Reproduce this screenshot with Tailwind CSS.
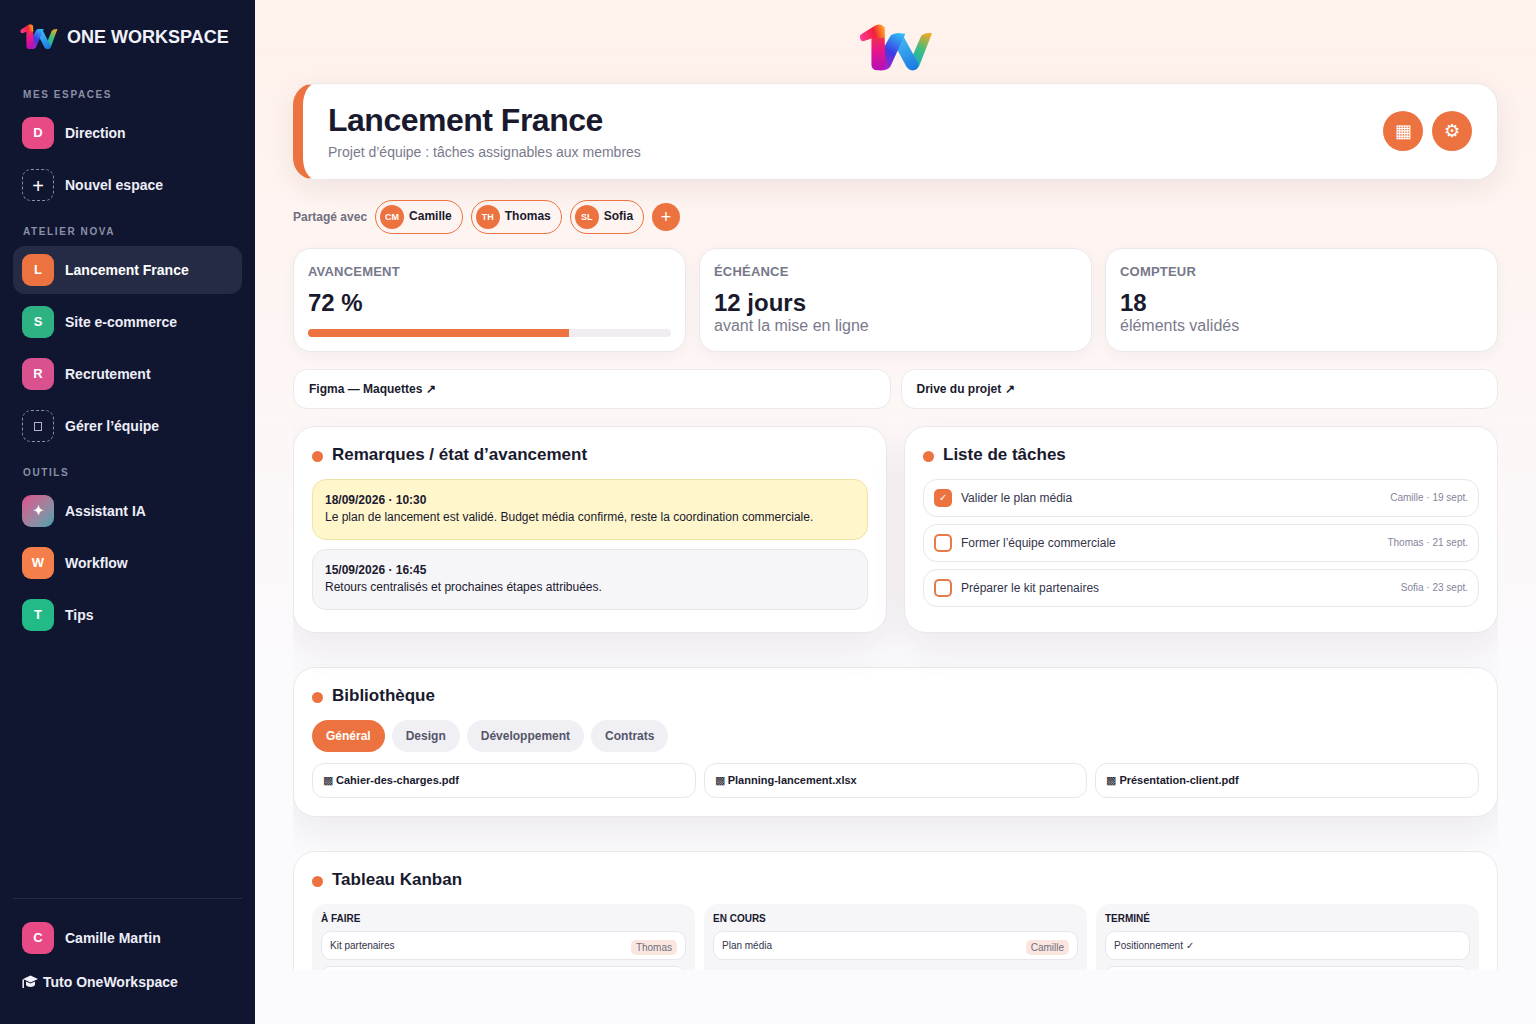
<!DOCTYPE html>
<html lang="fr">
<head>
    <meta charset="UTF-8">
    <title>One Workspace</title>
    <script src="https://cdn.jsdelivr.net/npm/@tailwindcss/browser@4"></script>
</head>
<body class="bg-[#fbfafd] font-['Liberation_Sans',Arial,sans-serif] text-[#1a1a2e] h-[1024px] overflow-hidden">
<svg class="absolute w-0 h-0">
    <defs>
        <linearGradient id="g1" gradientUnits="userSpaceOnUse" x1="60" y1="80" x2="130" y2="60"><stop offset="0" stop-color="#ff3a9a"/><stop offset="0.6" stop-color="#f2203a"/><stop offset="1" stop-color="#ff9a1e"/></linearGradient>
        <linearGradient id="g2" gradientUnits="userSpaceOnUse" x1="110" y1="60" x2="115" y2="185"><stop offset="0" stop-color="#f5402a"/><stop offset="0.5" stop-color="#e8158c"/><stop offset="1" stop-color="#b010b8"/></linearGradient>
        <linearGradient id="g3" gradientUnits="userSpaceOnUse" x1="180" y1="70" x2="115" y2="182"><stop offset="0" stop-color="#30c0f5"/><stop offset="0.5" stop-color="#3b3be6"/><stop offset="1" stop-color="#d018c0"/></linearGradient>
        <linearGradient id="g4" gradientUnits="userSpaceOnUse" x1="160" y1="70" x2="220" y2="182"><stop offset="0" stop-color="#4cc8f8"/><stop offset="1" stop-color="#1a78e0"/></linearGradient>
        <linearGradient id="g5" gradientUnits="userSpaceOnUse" x1="215" y1="182" x2="268" y2="70"><stop offset="0" stop-color="#10a8d0"/><stop offset="0.55" stop-color="#40bd80"/><stop offset="1" stop-color="#ffa51f"/></linearGradient>
        <symbol id="logo" viewBox="57 42 220 146" preserveAspectRatio="none">
            <path d="M205 165 L240 82 Q248 68 274 70 L236 170 Q228 186 210 182Z" fill="url(#g5)"/>
            <path d="M150 78 Q165 66 185 72 L232 160 Q236 178 222 182 Q208 186 198 172 L160 100Z" fill="url(#g4)"/>
            <path d="M100 170 L148 82 Q155 70 175 70 L195 72 L150 172 Q142 184 118 183 Q98 180 100 170Z" fill="url(#g3)"/>
            <path d="M94 70 L132 50 L136 165 Q134 184 112 183 Q94 182 94 165Z" fill="url(#g2)"/>
            <path d="M60 84 Q58 76 66 72 L104 47 Q122 38 132 52 L134 84 L94 86 L72 94 Q62 96 60 84Z" fill="url(#g1)"/>
        </symbol>
    </defs>
</svg>
<div class="flex h-[1024px]">
    <!-- Sidebar -->
    <aside class="w-[255px] shrink-0 bg-[#101630] text-[#eeeef8] px-[13px] flex flex-col text-sm font-bold">
        <div class="flex items-center h-[88px] pl-[7px] pb-[14px] gap-[9px]">
            <svg class="w-[38px] h-[26px]"><use href="#logo"/></svg>
            <span class="text-lg text-[#f2f2fb]">ONE WORKSPACE</span>
        </div>
        <div class="text-[10px] leading-3 tracking-[1.6px] text-[#8b8fa6] pl-[10px] mb-[9px] translate-y-px">MES ESPACES</div>
        <div class="flex flex-col gap-1">
            <div class="flex items-center gap-[11px] h-12 px-[9px]"><span class="w-8 h-8 rounded-[9px] bg-[#e84a85] flex items-center justify-center text-[13px] text-white">D</span>Direction</div>
            <div class="flex items-center gap-[11px] h-12 px-[9px]"><span class="w-8 h-8 rounded-[9px] border border-dashed border-[#8b8fa6] flex items-center justify-center text-xl font-normal text-white pt-[2px]">+</span>Nouvel espace</div>
        </div>
        <div class="text-[10px] leading-3 tracking-[1.6px] text-[#8b8fa6] pl-[10px] mt-4 mb-[9px] translate-y-px">ATELIER NOVA</div>
        <div class="flex flex-col gap-1">
            <div class="flex items-center gap-[11px] h-12 px-[9px] bg-[#252b45] rounded-xl text-white"><span class="w-8 h-8 rounded-[9px] bg-[#ec7340] flex items-center justify-center text-[13px] text-white">L</span>Lancement France</div>
            <div class="flex items-center gap-[11px] h-12 px-[9px]"><span class="w-8 h-8 rounded-[9px] bg-[#2fb283] flex items-center justify-center text-[13px] text-white">S</span>Site e-commerce</div>
            <div class="flex items-center gap-[11px] h-12 px-[9px]"><span class="w-8 h-8 rounded-[9px] bg-[#d9528f] flex items-center justify-center text-[13px] text-white">R</span>Recrutement</div>
            <div class="flex items-center gap-[11px] h-12 px-[9px]"><span class="w-8 h-8 rounded-[9px] border border-dashed border-[#8b8fa6] flex items-center justify-center"><span class="w-2 h-[9px] border border-[#b4b4c4] block"></span></span>Gérer l’équipe</div>
        </div>
        <div class="text-[10px] leading-3 tracking-[1.6px] text-[#8b8fa6] pl-[10px] mt-4 mb-[9px] translate-y-px">OUTILS</div>
        <div class="flex flex-col gap-1">
            <div class="flex items-center gap-[11px] h-12 px-[9px]"><span class="w-8 h-8 rounded-[9px] bg-gradient-to-br from-[#dc4a8c] to-[#2fa3b0] flex items-center justify-center text-[13px] text-white">✦</span>Assistant IA</div>
            <div class="flex items-center gap-[11px] h-12 px-[9px]"><span class="w-8 h-8 rounded-[9px] bg-[#f47f4b] flex items-center justify-center text-[13px] text-white">W</span>Workflow</div>
            <div class="flex items-center gap-[11px] h-12 px-[9px]"><span class="w-8 h-8 rounded-[9px] bg-[#22bb87] flex items-center justify-center text-[13px] text-white">T</span>Tips</div>
        </div>
        <div class="mt-auto border-t border-[#262c46] pt-[15px] pb-[30px]">
            <div class="flex items-center gap-[11px] h-12 px-[9px]"><span class="w-8 h-8 rounded-[9px] bg-[#e84a85] flex items-center justify-center text-[13px] text-white">C</span>Camille Martin</div>
            <div class="flex items-center gap-[5px] h-6 mt-2 pl-[9px]">
                <svg class="w-4 h-4" viewBox="0 0 16 16"><path d="M8.5 1.5 L16 5 L8.5 8.5 L1 5 Z" fill="#f2f2fb"/><path d="M4 7.5 V11 C5.5 13.6 11.5 13.6 13 11 V7.5 L8.5 9.6 Z" fill="#f2f2fb"/><path d="M1.2 5.5 V14" stroke="#f2f2fb" stroke-width="1.5"/></svg>
                Tuto OneWorkspace
            </div>
        </div>
    </aside>

    <!-- Main -->
    <main class="flex-1 min-w-0 h-[970px] overflow-hidden bg-gradient-to-b from-[#fff1eb] to-[#fbfafd] to-70% pl-[38px] pr-[38px]">
        <div class="h-[83px] flex justify-center items-start pt-[24px]">
            <svg class="w-[74px] h-[48px]"><use href="#logo"/></svg>
        </div>

        <section class="h-[97px] bg-white rounded-[22px] border border-[#ece8ea] border-l-[10px] border-l-[#ec7340] shadow-[0_8px_28px_rgba(60,30,30,0.08)] flex items-start justify-between pl-[25px] pr-[25px]">
            <div class="pt-[18px]">
                <h1 class="text-[32px] leading-9 font-bold tracking-[-0.5px] text-[#1a1a2e] mb-1">Lancement France</h1>
                <p class="text-sm leading-5 text-[#7a7a8c]">Projet d’équipe : tâches assignables aux membres</p>
            </div>
            <div class="flex gap-[9px] mt-[27px]">
                <span class="w-10 h-10 rounded-full bg-[#ec7340] text-white flex items-center justify-center text-[18px]">▦</span>
                <span class="w-10 h-10 rounded-full bg-[#ec7340] text-white flex items-center justify-center text-[18px]">⚙</span>
            </div>
        </section>

        <div class="flex items-center gap-2 mt-5 h-[34px] text-xs font-bold">
            <span class="text-[#6f6f80]">Partagé avec</span>
            <span class="flex items-center gap-[5px] h-[34px] pl-1 pr-[10px] rounded-full border border-[#ec7340]"><span class="w-6 h-6 rounded-full bg-[#ec7340] text-white text-[9px] flex items-center justify-center">CM</span><span class="-mt-[3px]">Camille</span></span>
            <span class="flex items-center gap-[5px] h-[34px] pl-1 pr-[10px] rounded-full border border-[#ec7340]"><span class="w-6 h-6 rounded-full bg-[#ec7340] text-white text-[9px] flex items-center justify-center">TH</span><span class="-mt-[3px]">Thomas</span></span>
            <span class="flex items-center gap-[5px] h-[34px] pl-1 pr-[10px] rounded-full border border-[#ec7340]"><span class="w-6 h-6 rounded-full bg-[#ec7340] text-white text-[9px] flex items-center justify-center">SL</span><span class="-mt-[3px]">Sofia</span></span>
            <span class="w-7 h-7 rounded-full bg-[#ec7340] text-white text-lg font-normal flex items-center justify-center">+</span>
        </div>

        <div class="grid grid-cols-3 gap-[13px] mt-[14px]">
            <div class="h-[104px] bg-white rounded-[18px] border border-[#ebe8ec] px-[14px] pt-[15px] shadow-[0_4px_14px_rgba(60,30,30,0.04)]">
                <div class="text-[13px] leading-4 tracking-[0.2px] text-[#77778a] font-bold">AVANCEMENT</div>
                <div class="text-2xl leading-7 font-bold mt-[9px]">72 %</div>
                <div class="h-2 bg-[#efedf2] rounded-full mt-[12px] overflow-hidden"><div class="h-2 w-[72%] bg-[#ec7340]"></div></div>
            </div>
            <div class="h-[104px] bg-white rounded-[18px] border border-[#ebe8ec] px-[14px] pt-[15px] shadow-[0_4px_14px_rgba(60,30,30,0.04)]">
                <div class="text-[13px] leading-4 tracking-[0.2px] text-[#77778a] font-bold">ÉCHÉANCE</div>
                <div class="text-2xl leading-7 font-bold mt-[9px]">12 jours</div>
                <div class="text-base leading-[18px] text-[#7a7a8c]">avant la mise en ligne</div>
            </div>
            <div class="h-[104px] bg-white rounded-[18px] border border-[#ebe8ec] px-[14px] pt-[15px] shadow-[0_4px_14px_rgba(60,30,30,0.04)]">
                <div class="text-[13px] leading-4 tracking-[0.2px] text-[#77778a] font-bold">COMPTEUR</div>
                <div class="text-2xl leading-7 font-bold mt-[9px]">18</div>
                <div class="text-base leading-[18px] text-[#7a7a8c]">éléments validés</div>
            </div>
        </div>

        <div class="grid grid-cols-2 gap-[10px] mt-[17px] text-xs font-bold">
            <div class="h-10 bg-white rounded-[14px] border border-[#ebe8ec] px-[15px] flex items-center">Figma — Maquettes ↗</div>
            <div class="h-10 bg-white rounded-[14px] border border-[#ebe8ec] px-[15px] flex items-center">Drive du projet ↗</div>
        </div>

        <div class="overflow-x-clip">
        <div class="grid grid-cols-2 gap-[17px] mt-[17px]">
            <section class="h-[207px] bg-white rounded-[22px] border border-[#ebe8ec] p-[18px] shadow-[0_16px_36px_rgba(40,30,60,0.07)]">
                <h2 class="flex items-center gap-[9px] text-[17px] leading-5 font-bold"><span class="w-[11px] h-[11px] rounded-full bg-[#ec7340] mt-[2px]"></span>Remarques / état d’avancement</h2>
                <div class="mt-[14px] h-[61px] rounded-[14px] bg-[#fff6cc] border border-[#efe3a4] px-3 pt-[12px] text-xs leading-4"><b class="block mb-px">18/09/2026 · 10:30</b>Le plan de lancement est validé. Budget média confirmé, reste la coordination commerciale.</div>
                <div class="mt-[9px] h-[61px] rounded-[14px] bg-[#f6f5f8] border border-[#e8e6ec] px-3 pt-[12px] text-xs leading-4"><b class="block mb-px">15/09/2026 · 16:45</b>Retours centralisés et prochaines étapes attribuées.</div>
            </section>
            <section class="h-[207px] bg-white rounded-[22px] border border-[#ebe8ec] p-[18px] shadow-[0_16px_36px_rgba(40,30,60,0.07)]">
                <h2 class="flex items-center gap-[9px] text-[17px] leading-5 font-bold"><span class="w-[11px] h-[11px] rounded-full bg-[#ec7340] mt-[2px]"></span>Liste de tâches</h2>
                <div class="mt-[14px] flex flex-col gap-[7px] text-xs">
                    <div class="h-[38px] rounded-[14px] border border-[#e8e6ec] flex items-center px-[10px] gap-[9px]"><span class="w-[18px] h-[18px] rounded-[5px] bg-[#ec7340] text-white text-[10px] flex items-center justify-center">✓</span><span class="flex-1 text-[#33334a]">Valider le plan média</span><span class="text-[10px] text-[#85859a]">Camille · 19 sept.</span></div>
                    <div class="h-[38px] rounded-[14px] border border-[#e8e6ec] flex items-center px-[10px] gap-[9px]"><span class="w-[18px] h-[18px] rounded-[5px] border-2 border-[#e87a4a]"></span><span class="flex-1 text-[#33334a]">Former l’équipe commerciale</span><span class="text-[10px] text-[#85859a]">Thomas · 21 sept.</span></div>
                    <div class="h-[38px] rounded-[14px] border border-[#e8e6ec] flex items-center px-[10px] gap-[9px]"><span class="w-[18px] h-[18px] rounded-[5px] border-2 border-[#e87a4a]"></span><span class="flex-1 text-[#33334a]">Préparer le kit partenaires</span><span class="text-[10px] text-[#85859a]">Sofia · 23 sept.</span></div>
                </div>
            </section>
        </div>

        <section class="h-[150px] mt-[34px] bg-white rounded-[22px] border border-[#ebe8ec] p-[18px] shadow-[0_16px_36px_rgba(40,30,60,0.07)]">
            <h2 class="flex items-center gap-[9px] text-[17px] leading-5 font-bold"><span class="w-[11px] h-[11px] rounded-full bg-[#ec7340] mt-[2px]"></span>Bibliothèque</h2>
            <div class="flex gap-[7px] mt-[14px] text-xs font-bold text-[#55556a]">
                <span class="h-8 px-[14px] rounded-full bg-[#ec7340] text-white flex items-center">Général</span>
                <span class="h-8 px-[14px] rounded-full bg-[#f0eff4] flex items-center">Design</span>
                <span class="h-8 px-[14px] rounded-full bg-[#f0eff4] flex items-center">Développement</span>
                <span class="h-8 px-[14px] rounded-full bg-[#f0eff4] flex items-center">Contrats</span>
            </div>
            <div class="grid grid-cols-3 gap-2 mt-[11px] text-[11px] font-bold">
                <div class="h-[35px] rounded-xl border border-[#e8e6ec] px-[10px] flex items-center whitespace-pre"><span class="font-normal">▩</span> Cahier-des-charges.pdf</div>
                <div class="h-[35px] rounded-xl border border-[#e8e6ec] px-[10px] flex items-center whitespace-pre"><span class="font-normal">▩</span> Planning-lancement.xlsx</div>
                <div class="h-[35px] rounded-xl border border-[#e8e6ec] px-[10px] flex items-center whitespace-pre"><span class="font-normal">▩</span> Présentation-client.pdf</div>
            </div>
        </section>

        <section class="mt-[34px] bg-white rounded-[22px] border border-[#ebe8ec] p-[18px] h-[300px]">
            <h2 class="flex items-center gap-[9px] text-[17px] leading-5 font-bold"><span class="w-[11px] h-[11px] rounded-full bg-[#ec7340] mt-[2px]"></span>Tableau Kanban</h2>
            <div class="grid grid-cols-3 gap-[9px] mt-[14px]">
                <div class="bg-[#f6f5f8] rounded-[14px] p-[9px] h-[200px]">
                    <div class="text-[10px] leading-[10px] font-bold mt-[1px]">À FAIRE</div>
                    <div class="h-[29px] mt-[7px] bg-white rounded-[10px] border border-[#e8e6ec] px-2 flex justify-between text-[10px] text-[#33334a]"><span class="mt-[6px]">Kit partenaires</span><span class="self-end h-[15px] px-[5px] mb-1 rounded-[5px] bg-[#fbe6df] text-[#6f6f80] flex items-center">Thomas</span></div>
                    <div class="h-[29px] mt-[6px] bg-white rounded-[10px] border border-[#e8e6ec]"></div>
                </div>
                <div class="bg-[#f6f5f8] rounded-[14px] p-[9px] h-[200px]">
                    <div class="text-[10px] leading-[10px] font-bold mt-[1px]">EN COURS</div>
                    <div class="h-[29px] mt-[7px] bg-white rounded-[10px] border border-[#e8e6ec] px-2 flex justify-between text-[10px] text-[#33334a]"><span class="mt-[6px]">Plan média</span><span class="self-end h-[15px] px-[5px] mb-1 rounded-[5px] bg-[#fbe6df] text-[#6f6f80] flex items-center">Camille</span></div>
                </div>
                <div class="bg-[#f6f5f8] rounded-[14px] p-[9px] h-[200px]">
                    <div class="text-[10px] leading-[10px] font-bold mt-[1px]">TERMINÉ</div>
                    <div class="h-[29px] mt-[7px] bg-white rounded-[10px] border border-[#e8e6ec] px-2 flex justify-between text-[10px] text-[#33334a]"><span class="mt-[6px]">Positionnement ✓</span></div>
                    <div class="h-[29px] mt-[6px] bg-white rounded-[10px] border border-[#e8e6ec]"></div>
                </div>
            </div>
        </section>
        </div>
    </main>
</div>
</body>
</html>
